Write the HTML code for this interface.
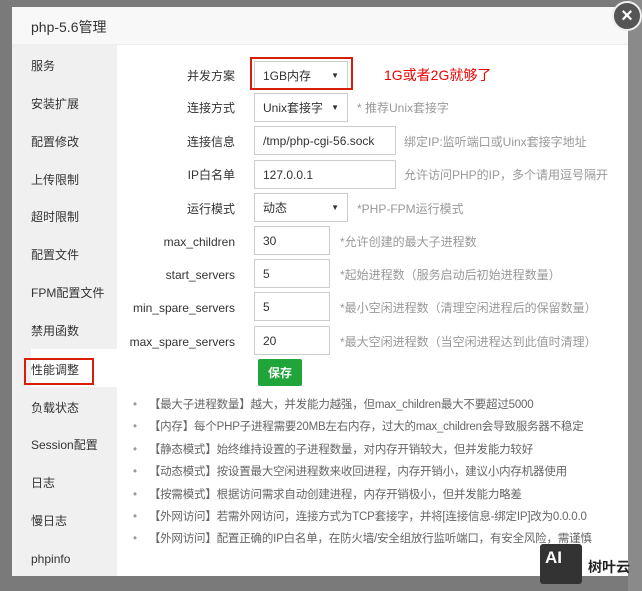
<!DOCTYPE html>
<html><head><meta charset="utf-8"><style>
*{box-sizing:border-box;margin:0;padding:0}
body{width:642px;height:591px;overflow:hidden;background:#7a7a7a;font-family:"Liberation Sans","Noto Sans CJK SC",sans-serif;position:relative}
.rstrip{position:absolute;left:628px;top:0;width:14px;height:591px;background:#8a8a8a}
.dlg{position:absolute;left:12px;top:7px;width:616px;height:569px;background:#fff}
.hd{height:38px;background:#f8f8f8;border-bottom:1px solid #eee;font-size:14px;color:#333;padding:10px 0 0 19px}
.side{position:absolute;left:0;top:38px;width:105px;height:531px;background:#f0f0f0}
.side div{position:absolute;left:19px;font-size:12px;color:#333;line-height:14px}
.act{position:absolute;left:0;top:304px;width:105px;height:38px;background:#fff}
.red{position:absolute;border:2px solid #d81e06}
.lab{position:absolute;font-size:12px;color:#333;text-align:right;width:118px;left:105px;line-height:14px}
.inp{position:absolute;left:242px;border:1px solid #ccc;height:29px;font-size:12px;color:#333;padding:0 0 0 8px;display:flex;align-items:center;background:#fff}
.sel:after{content:"▼";position:absolute;right:8px;top:9px;font-size:8px;line-height:10px}
.tip{position:absolute;font-size:12px;color:#999;line-height:14px}
.btn{position:absolute;left:246px;top:352px;width:44px;height:27px;background:#20a53a;color:#fff;font-size:12px;font-weight:bold;border-radius:2px;display:flex;align-items:center;justify-content:center}
ul{position:absolute;left:119px;top:391px;list-style:none}
li{font-size:11.5px;color:#666;height:22.4px;line-height:14px;white-space:nowrap;letter-spacing:-0.2px}
li:before{content:"•";color:#999;margin-right:12px;margin-left:2px}
.close{position:absolute;left:600px;top:-6px;width:30px;height:30px;border-radius:50%;background:#555;border:2px solid #eee;color:#fff;font-size:20px;display:flex;align-items:center;justify-content:center;font-weight:bold}
.wm{position:absolute;left:540px;top:544px;width:42px;height:40px;background:#333;border-radius:3px;color:#fff;font-weight:bold;font-size:17px;padding:4px 0 0 5px}
.wmt{position:absolute;left:588px;top:557px;font-size:14px;color:#222;font-weight:bold}
</style></head><body>
<div class="rstrip"></div>
<div class="dlg">
<div class="hd">php-5.6管理</div>
<div class="side">
<div class="act"></div>
<div style="top:14px">服务</div><div style="top:52px">安装扩展</div><div style="top:90px">配置修改</div><div style="top:128px">上传限制</div><div style="top:165px">超时限制</div><div style="top:203px">配置文件</div><div style="top:241px">FPM配置文件</div><div style="top:279px">禁用函数</div><div style="top:318px">性能调整</div><div style="top:356px">负载状态</div><div style="top:393px">Session配置</div><div style="top:431px">日志</div><div style="top:469px">慢日志</div><div style="top:507px">phpinfo</div>
<div class="red" style="left:12px;top:313px;width:70px;height:27px;position:absolute"></div>
</div>
<div class="lab" style="top:62px">并发方案</div>
<div class="lab" style="top:94px">连接方式</div>
<div class="lab" style="top:128px">连接信息</div>
<div class="lab" style="top:161px">IP白名单</div>
<div class="lab" style="top:195px">运行模式</div>
<div class="lab" style="top:228px">max_children</div>
<div class="lab" style="top:261px">start_servers</div>
<div class="lab" style="top:294px">min_spare_servers</div>
<div class="lab" style="top:328px">max_spare_servers</div>
<div class="inp sel" style="top:54px;width:94px">1GB内存</div>
<div class="red" style="left:238px;top:50px;width:103px;height:33px"></div>
<div style="position:absolute;left:372px;top:58px;color:#e00;font-size:14px">1G或者2G就够了</div>
<div class="inp sel" style="top:86px;width:94px">Unix套接字</div>
<div class="tip" style="left:345px;top:94px">* 推荐Unix套接字</div>
<div class="inp" style="top:119px;width:142px">/tmp/php-cgi-56.sock</div>
<div class="tip" style="left:392px;top:128px">绑定IP:监听端口或Uinx套接字地址</div>
<div class="inp" style="top:153px;width:142px">127.0.0.1</div>
<div class="tip" style="left:392px;top:161px">允许访问PHP的IP，多个请用逗号隔开</div>
<div class="inp sel" style="top:186px;width:94px">动态</div>
<div class="tip" style="left:345px;top:195px">*PHP-FPM运行模式</div>
<div class="inp" style="top:219px;width:76px">30</div>
<div class="tip" style="left:328px;top:228px">*允许创建的最大子进程数</div>
<div class="inp" style="top:252px;width:76px">5</div>
<div class="tip" style="left:328px;top:261px">*起始进程数（服务启动后初始进程数量）</div>
<div class="inp" style="top:285px;width:76px">5</div>
<div class="tip" style="left:328px;top:294px">*最小空闲进程数（清理空闲进程后的保留数量）</div>
<div class="inp" style="top:319px;width:76px">20</div>
<div class="tip" style="left:328px;top:328px">*最大空闲进程数（当空闲进程达到此值时清理）</div>
<div class="btn">保存</div>
<ul>
<li>【最大子进程数量】越大，并发能力越强，但max_children最大不要超过5000</li>
<li>【内存】每个PHP子进程需要20MB左右内存，过大的max_children会导致服务器不稳定</li>
<li>【静态模式】始终维持设置的子进程数量，对内存开销较大，但并发能力较好</li>
<li>【动态模式】按设置最大空闲进程数来收回进程，内存开销小，建议小内存机器使用</li>
<li>【按需模式】根据访问需求自动创建进程，内存开销极小，但并发能力略差</li>
<li>【外网访问】若需外网访问，连接方式为TCP套接字，并将[连接信息-绑定IP]改为0.0.0.0</li>
<li>【外网访问】配置正确的IP白名单，在防火墙/安全组放行监听端口，有安全风险，需谨慎</li>
</ul>
<div class="close">×</div>
</div>
<div class="wm">AI</div>
<div class="wmt">树叶云</div>
</body></html>
